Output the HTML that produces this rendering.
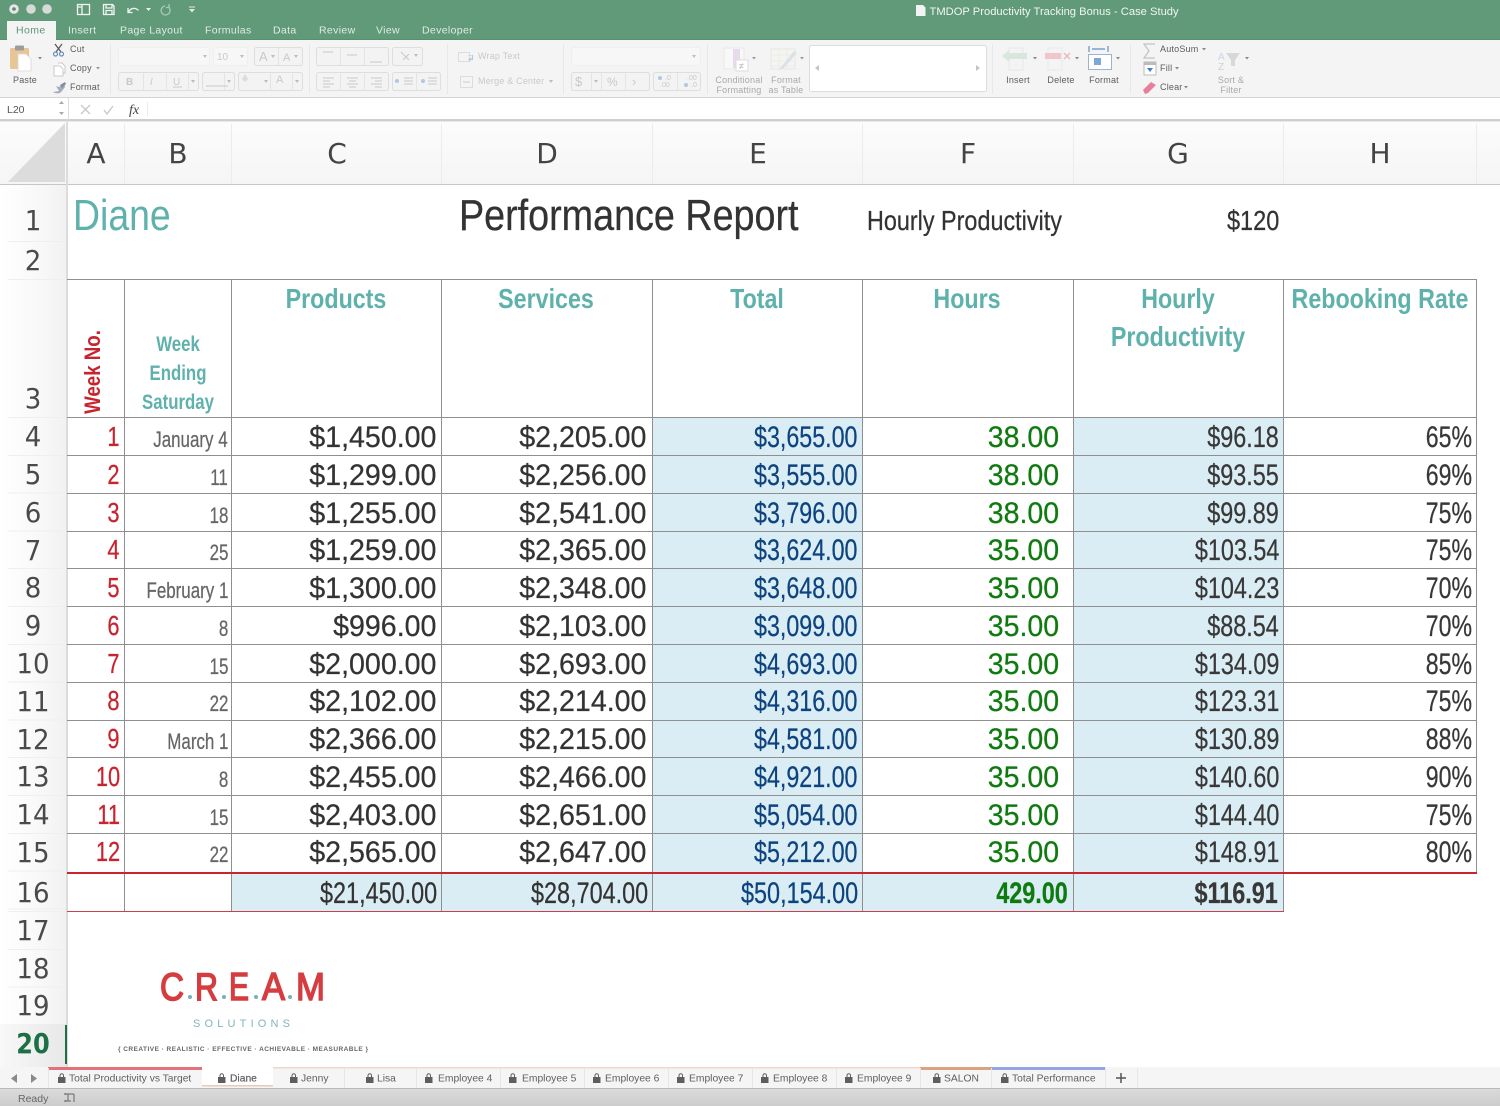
<!DOCTYPE html>
<html><head><meta charset="utf-8"><title>Performance Report</title>
<style>
html,body{margin:0;padding:0;background:#fff}
#p{position:relative;width:1500px;height:1106px;overflow:hidden;background:#fff;font-family:"Liberation Sans",sans-serif;color:#333}
#p div,#p span{position:absolute;white-space:nowrap}
svg{position:absolute;left:0;top:0}
svg text{font-family:"Liberation Sans",sans-serif}
.rh{left:0;width:66px;text-align:center;font:28px/38px "DejaVu Sans",sans-serif;color:#4a4a4a;height:38px;transform:scaleX(.93)}
.ch{top:134px;font:28px/40px "DejaVu Sans",sans-serif;color:#444;width:100px;text-align:center}
.r{left:0;width:1500px;height:38px;font-size:30px;line-height:38px;-webkit-text-stroke:.25px currentColor}
.r span{transform-origin:100% 50%;top:1px}
.a{right:1380px;color:#c8242f;font-size:28px;transform:scaleX(.78);top:0!important}
.b{right:1272px;color:#666;font-size:22px;top:3px!important;transform:scaleX(.77)}
.c{right:1064px;transform:scaleX(.953)}
.d{right:854px;transform:scaleX(.953)}
.e{right:643px;color:#0d437f;transform:scaleX(.775)}
.f{right:441px;color:#0f7a0f;transform:scaleX(.95)}
.g{right:221px;color:#383838;transform:scaleX(.78)}
.h{right:28px;color:#383838;transform:scaleX(.77)}
.hd{font-weight:bold;font-size:28px;line-height:34px;color:#5fb1ac;transform:scaleX(.83);text-align:center;width:300px}
.wk{font-weight:bold;font-size:21px;line-height:29px;color:#5fb1ac;transform:scaleX(.8);text-align:center;width:200px;left:78px}
.vl{width:1px;background:#8f8f8f}
.hl{height:1px;background:#8f8f8f}
.fill{background:#dbedf4}
</style></head><body><div id="p">

<!-- sheet fills -->
<div class="fill" style="left:652px;top:418px;width:211px;height:456px"></div>
<div class="fill" style="left:1073px;top:418px;width:211px;height:456px"></div>
<div class="fill" style="left:232px;top:874px;width:1052px;height:37px"></div>

<!-- header backgrounds -->
<div style="left:0;top:122px;width:1500px;height:62px;background:linear-gradient(#fcfcfc,#f5f5f5)"></div>
<div style="left:0;top:184px;width:66px;height:883px;background:linear-gradient(90deg,#fff,#f7f7f7 70%,#f1f1f1)"></div>
<div style="left:8px;top:241px;width:58px;height:1px;background:#efefef"></div>
<div style="left:8px;top:279px;width:58px;height:1px;background:#efefef"></div>
<div style="left:8px;top:417px;width:58px;height:494px;background:repeating-linear-gradient(#efefef 0,#efefef 1px,transparent 1px,transparent 37.8px)"></div>
<div style="left:8px;top:911px;width:58px;height:114px;background:repeating-linear-gradient(#efefef 0,#efefef 1px,transparent 1px,transparent 37.8px)"></div>
<div style="left:0;top:1024px;width:66px;height:43px;background:linear-gradient(90deg,#f8f8f8,#e8e8e8)"></div>
<div style="left:0;top:184px;width:1500px;height:1px;background:#c6c6c6"></div>
<div style="left:66px;top:122px;width:2px;height:945px;background:#dcdcdc"></div>
<div style="left:65px;top:1025px;width:2px;height:39px;background:#1d7044"></div>

<!-- grid -->
<div class="hl" style="left:67px;top:279px;width:1410px"></div>
<div class="hl" style="left:67px;top:417px;width:1410px"></div>
<div class="hl" style="left:67px;top:455px;width:1410px"></div>
<div class="hl" style="left:67px;top:493px;width:1410px"></div>
<div class="hl" style="left:67px;top:531px;width:1410px"></div>
<div class="hl" style="left:67px;top:568px;width:1410px"></div>
<div class="hl" style="left:67px;top:606px;width:1410px"></div>
<div class="hl" style="left:67px;top:644px;width:1410px"></div>
<div class="hl" style="left:67px;top:682px;width:1410px"></div>
<div class="hl" style="left:67px;top:720px;width:1410px"></div>
<div class="hl" style="left:67px;top:757px;width:1410px"></div>
<div class="hl" style="left:67px;top:795px;width:1410px"></div>
<div class="hl" style="left:67px;top:833px;width:1410px"></div>
<div class="vl" style="left:124px;top:279px;height:633px"></div>
<div class="vl" style="left:231px;top:279px;height:633px"></div>
<div class="vl" style="left:441px;top:279px;height:633px"></div>
<div class="vl" style="left:652px;top:279px;height:633px"></div>
<div class="vl" style="left:862px;top:279px;height:633px"></div>
<div class="vl" style="left:1073px;top:279px;height:633px"></div>
<div class="vl" style="left:1283px;top:279px;height:633px"></div>
<div class="vl" style="left:1476px;top:279px;height:595px"></div>
<div style="left:67px;top:872px;width:1410px;height:2px;background:#c9252f"></div>
<div style="left:67px;top:911px;width:1217px;height:1px;background:#c9404a"></div>

<!-- column header separators -->
<div style="left:124px;top:124px;width:1px;height:60px;background:#ececec"></div>
<div style="left:231px;top:124px;width:1px;height:60px;background:#ececec"></div>
<div style="left:441px;top:124px;width:1px;height:60px;background:#ececec"></div>
<div style="left:652px;top:124px;width:1px;height:60px;background:#ececec"></div>
<div style="left:862px;top:124px;width:1px;height:60px;background:#ececec"></div>
<div style="left:1073px;top:124px;width:1px;height:60px;background:#ececec"></div>
<div style="left:1283px;top:124px;width:1px;height:60px;background:#ececec"></div>
<div style="left:1476px;top:124px;width:1px;height:60px;background:#ececec"></div>

<div class="ch" style="left:46px">A</div>
<div class="ch" style="left:128px">B</div>
<div class="ch" style="left:287px">C</div>
<div class="ch" style="left:497px">D</div>
<div class="ch" style="left:708px">E</div>
<div class="ch" style="left:918px">F</div>
<div class="ch" style="left:1128px">G</div>
<div class="ch" style="left:1330px">H</div>

<div class="rh" style="top:202px">1</div>
<div class="rh" style="top:242px">2</div>
<div class="rh" style="top:380px">3</div>
<div class="rh" style="top:418px">4</div>
<div class="rh" style="top:456px">5</div>
<div class="rh" style="top:494px">6</div>
<div class="rh" style="top:532px">7</div>
<div class="rh" style="top:569px">8</div>
<div class="rh" style="top:607px">9</div>
<div class="rh" style="top:645px">10</div>
<div class="rh" style="top:683px">11</div>
<div class="rh" style="top:721px">12</div>
<div class="rh" style="top:758px">13</div>
<div class="rh" style="top:796px">14</div>
<div class="rh" style="top:834px">15</div>
<div class="rh" style="top:874px">16</div>
<div class="rh" style="top:912px">17</div>
<div class="rh" style="top:950px">18</div>
<div class="rh" style="top:987px">19</div>
<div class="rh" style="top:1025px;font-weight:bold;color:#1d7044;transform:scaleX(.86)">20</div>

<!-- title row -->
<div style="left:73px;top:190px;font-size:44px;line-height:52px;color:#5fb1ac;transform:scaleX(.85);transform-origin:0 50%">Diane</div>
<div style="left:459px;top:190px;font-size:44px;line-height:52px;color:#333;transform:scaleX(.857);transform-origin:0 50%;-webkit-text-stroke:.3px #333">Performance Report</div>
<div style="left:867px;top:204px;font-size:28px;line-height:34px;color:#333;transform:scaleX(.835);transform-origin:0 50%;-webkit-text-stroke:.25px #333">Hourly Productivity</div>
<div style="right:221px;top:204px;font-size:28px;line-height:34px;color:#333;transform:scaleX(.84);transform-origin:100% 50%;-webkit-text-stroke:.25px #333">$120</div>

<!-- table header -->
<div class="hd" style="left:186px;top:282px">Products</div>
<div class="hd" style="left:396px;top:282px">Services</div>
<div class="hd" style="left:607px;top:282px">Total</div>
<div class="hd" style="left:817px;top:282px">Hours</div>
<div class="hd" style="left:1028px;top:282px">Hourly</div>
<div class="hd" style="left:1028px;top:320px">Productivity</div>
<div class="hd" style="left:1230px;top:282px">Rebooking Rate</div>
<div class="wk" style="top:330px">Week</div>
<div class="wk" style="top:359px">Ending</div>
<div class="wk" style="top:388px">Saturday</div>
<div style="left:43px;top:359px;width:100px;height:26px;text-align:center;font-weight:bold;font-size:22px;line-height:26px;color:#c8242f;transform:rotate(-90deg) scaleX(.85)">Week No.</div>

<!-- rows -->
<div class="r" style="top:418px"><span class="a">1</span><span class="b">January 4</span><span class="c">$1,450.00</span><span class="d">$2,205.00</span><span class="e">$3,655.00</span><span class="f">38.00</span><span class="g">$96.18</span><span class="h">65%</span></div>
<div class="r" style="top:456px"><span class="a">2</span><span class="b">11</span><span class="c">$1,299.00</span><span class="d">$2,256.00</span><span class="e">$3,555.00</span><span class="f">38.00</span><span class="g">$93.55</span><span class="h">69%</span></div>
<div class="r" style="top:494px"><span class="a">3</span><span class="b">18</span><span class="c">$1,255.00</span><span class="d">$2,541.00</span><span class="e">$3,796.00</span><span class="f">38.00</span><span class="g">$99.89</span><span class="h">75%</span></div>
<div class="r" style="top:531px"><span class="a">4</span><span class="b">25</span><span class="c">$1,259.00</span><span class="d">$2,365.00</span><span class="e">$3,624.00</span><span class="f">35.00</span><span class="g">$103.54</span><span class="h">75%</span></div>
<div class="r" style="top:569px"><span class="a">5</span><span class="b">February 1</span><span class="c">$1,300.00</span><span class="d">$2,348.00</span><span class="e">$3,648.00</span><span class="f">35.00</span><span class="g">$104.23</span><span class="h">70%</span></div>
<div class="r" style="top:607px"><span class="a">6</span><span class="b">8</span><span class="c">$996.00</span><span class="d">$2,103.00</span><span class="e">$3,099.00</span><span class="f">35.00</span><span class="g">$88.54</span><span class="h">70%</span></div>
<div class="r" style="top:645px"><span class="a">7</span><span class="b">15</span><span class="c">$2,000.00</span><span class="d">$2,693.00</span><span class="e">$4,693.00</span><span class="f">35.00</span><span class="g">$134.09</span><span class="h">85%</span></div>
<div class="r" style="top:682px"><span class="a">8</span><span class="b">22</span><span class="c">$2,102.00</span><span class="d">$2,214.00</span><span class="e">$4,316.00</span><span class="f">35.00</span><span class="g">$123.31</span><span class="h">75%</span></div>
<div class="r" style="top:720px"><span class="a">9</span><span class="b">March 1</span><span class="c">$2,366.00</span><span class="d">$2,215.00</span><span class="e">$4,581.00</span><span class="f">35.00</span><span class="g">$130.89</span><span class="h">88%</span></div>
<div class="r" style="top:758px"><span class="a">10</span><span class="b">8</span><span class="c">$2,455.00</span><span class="d">$2,466.00</span><span class="e">$4,921.00</span><span class="f">35.00</span><span class="g">$140.60</span><span class="h">90%</span></div>
<div class="r" style="top:796px"><span class="a">11</span><span class="b">15</span><span class="c">$2,403.00</span><span class="d">$2,651.00</span><span class="e">$5,054.00</span><span class="f">35.00</span><span class="g">$144.40</span><span class="h">75%</span></div>
<div class="r" style="top:833px"><span class="a">12</span><span class="b">22</span><span class="c">$2,565.00</span><span class="d">$2,647.00</span><span class="e">$5,212.00</span><span class="f">35.00</span><span class="g">$148.91</span><span class="h">80%</span></div>
<div class="r" style="top:874px">
<span class="c" style="right:1063px;transform:scaleX(.78)">$21,450.00</span>
<span class="d" style="right:852px;transform:scaleX(.78)">$28,704.00</span>
<span class="e" style="right:642px;transform:scaleX(.78)">$50,154.00</span>
<span class="f" style="right:432px;font-weight:bold;transform:scaleX(.78)">429.00</span>
<span class="g" style="right:222px;font-weight:bold">$116.91</span>
</div>

<!-- logo -->
<svg width="1500" height="1106" style="pointer-events:none">
<g font-size="39" font-weight="normal" fill="#d53d41" stroke="#d53d41" stroke-width="1.500">
<text x="160" y="1000" textLength="24" lengthAdjust="spacingAndGlyphs">C</text>
<text x="195" y="1000" textLength="23" lengthAdjust="spacingAndGlyphs">R</text>
<text x="229" y="1000" textLength="20" lengthAdjust="spacingAndGlyphs">E</text>
<text x="262" y="1000" textLength="23" lengthAdjust="spacingAndGlyphs">A</text>
<text x="296" y="1000" textLength="29" lengthAdjust="spacingAndGlyphs">M</text>
</g>
<g fill="#6fb3b4"><circle cx="190" cy="997" r="2"/><circle cx="224" cy="997" r="2"/><circle cx="256" cy="997" r="2"/><circle cx="290" cy="997" r="2"/></g>
<text x="193" y="1027" font-size="11" fill="#7fb7bb" textLength="97" lengthAdjust="spacing">SOLUTIONS</text>
<text x="118" y="1051" font-size="6.5" font-weight="bold" fill="#666" textLength="250" lengthAdjust="spacing">{ CREATIVE · REALISTIC · EFFECTIVE · ACHIEVABLE · MEASURABLE }</text>

<!-- corner -->
<polygon points="8,182 65,123 65,182" fill="#dcdcdc"/>

<!-- title bar + ribbon -->
<rect x="0" y="0" width="1500" height="40" fill="#609a79"/>
<rect x="0" y="39" width="1500" height="1" fill="#56906f"/>
<rect x="0" y="40" width="1500" height="57" fill="#f5f4f4"/>
<rect x="0" y="97" width="1500" height="1" fill="#d4d4d4"/>
<rect x="0" y="98" width="1500" height="22" fill="#fff"/>
<rect x="0" y="119" width="1500" height="3" fill="#cfcfcf"/>
<rect x="0" y="121" width="1500" height="1" fill="#e8e8e8"/>
<rect x="7" y="21" width="49" height="19" fill="#f5f4f4"/>

<circle cx="14" cy="9" r="4.8" fill="#e4e7e5"/><circle cx="14" cy="9" r="1.8" fill="#6d7f75"/>
<circle cx="31" cy="9" r="4.8" fill="#d5dbd7"/><circle cx="47" cy="9" r="4.8" fill="#d5dbd7"/>

<g fill="none" stroke="#f0f5f2" stroke-width="1.3">
<rect x="77.5" y="4.5" width="12" height="10"/><path d="M82 5v9M78 7h4"/>
<path d="M103.5 4.5h9l1.5 1.5v8.500h-10.500zM106 4.500v3.500h6v-3.500M106 14.500v-4h6v4"/>
<path d="M128 8v4.500h4.500M128.500 12c2-4 7-5 10-1.500"/>
<path d="M165 6a4.500 4.500 0 1 0 4 1.500M169 4v3.500h-3" stroke="#a9c8b6"/>
</g>
<path d="M146 8h5l-2.500 3z" fill="#eaf2ed"/>
<path d="M189 9h6l-3 3.500zM189 6.500h6v1h-6z" fill="#dfe9e3"/>
<path d="M916 5h7l2.500 2.500v8.500h-9.500z" fill="#f1f4f2"/>
<text x="929.500" y="15" font-size="11.200" fill="#f2f6f3">TMDOP Productivity Tracking Bonus - Case Study</text>

<g font-size="10.5" fill="#e1ece5" letter-spacing=".35">
<text x="68" y="33.500">Insert</text><text x="120" y="33.500">Page Layout</text><text x="205" y="33.500">Formulas</text><text x="273" y="33.500">Data</text><text x="319" y="33.500">Review</text><text x="376" y="33.500">View</text><text x="422" y="33.500">Developer</text>
</g>
<text x="16" y="33.500" font-size="10.5" fill="#60957a" letter-spacing=".4">Home</text>

<!-- separators -->
<g fill="#e9e8e8"><rect x="110" y="44" width="1" height="50"/><rect x="309" y="44" width="1" height="50"/><rect x="447" y="44" width="1" height="50"/><rect x="563" y="44" width="1" height="50"/><rect x="707" y="44" width="1" height="50"/><rect x="992" y="44" width="1" height="50"/><rect x="1130" y="44" width="1" height="50"/></g>

<!-- paste -->
<rect x="10" y="48" width="19" height="21" rx="1.500" fill="#e9c596"/>
<rect x="15" y="45.500" width="9" height="5" rx="1" fill="#9c9c9c"/>
<path d="M18 54h8l5 5v12h-13z" fill="#fff" stroke="#d8d8d8" stroke-width=".8"/>
<path d="M38 57h4l-2 2.500z" fill="#888"/>
<g fill="none" stroke="#555" stroke-width="1.200"><path d="M55 44l6 8M62 44l-6 8"/></g>
<g fill="none" stroke="#6a8fc0" stroke-width="1.200"><circle cx="55.500" cy="54" r="2"/><circle cx="61.500" cy="54" r="2"/></g>
<path d="M54 66h6l3 3v7h-9zM58 63h4l3 3v7h-2" fill="#fff" stroke="#bcbcbc" stroke-width=".8"/>
<path d="M64 83l-5 4-3-1 3 5-6 1c3 2 7 2 9-1l3-4z" fill="#a8aeb8"/>
<path d="M60 85l5-3 1 2-4 4z" fill="#7e8da6"/>

<g font-size="9" fill="#5d5d5d" letter-spacing=".2">
<text x="13" y="83">Paste</text><text x="70" y="52">Cut</text><text x="70" y="71">Copy</text><text x="70" y="90">Format</text>
</g>
<path d="M96 67h4l-2 2.500z" fill="#999"/>

<!-- disabled boxes -->
<g fill="#f8f7f7" stroke="#efefef">
<rect x="118.500" y="47.500" width="91" height="18" rx="2"/><rect x="213.500" y="47.500" width="34" height="18" rx="2"/><rect x="571.500" y="47.500" width="129" height="18" rx="2"/>
</g>
<g fill="#f3f3f3" stroke="#dedede">
<rect x="254.500" y="47.500" width="48" height="18" rx="2"/>
<rect x="118.500" y="72.500" width="80" height="18" rx="2"/><rect x="202.500" y="72.500" width="32" height="18" rx="2"/><rect x="238.500" y="72.500" width="64" height="18" rx="2"/>
<rect x="316.500" y="47.500" width="72" height="18" rx="2"/><rect x="392.500" y="47.500" width="30" height="18" rx="2"/>
<rect x="316.500" y="72.500" width="72" height="18" rx="2"/><rect x="392.500" y="72.500" width="48" height="18" rx="2"/>
<rect x="571.500" y="72.500" width="78" height="18" rx="2"/><rect x="653.500" y="72.500" width="47" height="18" rx="2"/>
</g>
<g fill="#e4e4e4">
<rect x="278" y="48" width="1" height="17"/><rect x="143" y="73" width="1" height="17"/><rect x="166" y="73" width="1" height="17"/><rect x="188" y="73" width="1" height="17"/><rect x="224" y="73" width="1" height="17"/><rect x="270" y="73" width="1" height="17"/><rect x="292" y="73" width="1" height="17"/>
<rect x="340" y="48" width="1" height="17"/><rect x="364" y="48" width="1" height="17"/><rect x="340" y="73" width="1" height="17"/><rect x="364" y="73" width="1" height="17"/><rect x="416" y="73" width="1" height="17"/>
<rect x="591" y="73" width="1" height="17"/><rect x="601" y="73" width="1" height="17"/><rect x="625" y="73" width="1" height="17"/><rect x="677" y="73" width="1" height="17"/>
</g>
<g fill="#c9c9c9" font-size="11">
<text x="259" y="61" font-size="13">A</text><text x="283" y="61">A</text>
<text x="126" y="85" font-size="10" font-weight="bold">B</text><text x="150" y="85" font-size="10" font-style="italic">I</text><text x="173" y="85" font-size="10">U</text>
<text x="217" y="60" font-size="10">10</text>
<text x="276" y="83" font-size="11">A</text>
<text x="575" y="86" font-size="13">$</text><text x="607" y="86" font-size="12">%</text><text x="632" y="86" font-size="13">›</text>
<text x="478" y="59" font-size="9" letter-spacing=".2">Wrap Text</text>
<text x="478" y="84" font-size="9" letter-spacing=".2">Merge &amp; Center</text>
</g>
<g fill="#bdbdbd"><path d="M203 55h4l-2 3zM240 55h4l-2 3zM191 80h4l-2 3zM227 80h4l-2 3zM264 80h4l-2 3zM295 80h4l-2 3zM414 54h4l-2 3zM549 80h4l-2 3zM594 80h4l-2 3zM692 55h4l-2 3zM271 55h4l-2 3zM294 55h4l-2 3z"/></g>
<path d="M245 74l3 5-3 3-3-3z" fill="#dcdcdc"/>
<g stroke="#c9c9c9" fill="none">
<path d="M323 52h10M347 55h10M370 62h12M206 86h22M173 87h9M323 78h11M323 81h7M323 84h11M323 87h7M347 78h11M349 81h7M347 84h11M349 87h7M371 78h11M375 81h7M371 84h11M375 87h7M404 78h9M404 81h9M404 84h9M428 78h9M428 81h9M428 84h9"/>
<path d="M401 52l8 8M403 60l6-6"/>
<rect x="458.500" y="52.500" width="11" height="9" stroke="#ddd"/><rect x="460.500" y="76.500" width="12" height="11" stroke="#ddd"/>
<path d="M463 82h7" stroke="#ccc"/>
</g>
<path d="M468 55h5v5h-3l1 2-3-2.500 3-2.500-1 1.500h2v-3h-4z" fill="#b3c6dc"/>
<g fill="#b4c7dd"><circle cx="397" cy="81" r="2"/><circle cx="423" cy="81" r="2"/><circle cx="660" cy="78" r="2"/><circle cx="686" cy="85" r="2"/></g>
<g fill="#c9c9c9" font-size="7"><text x="665" y="80">.0</text><text x="660" y="87">.00</text><text x="687" y="80">.00</text><text x="691" y="87">.0</text></g>

<!-- conditional formatting / table -->
<rect x="724" y="48" width="20" height="21" fill="#f8f8f8" stroke="#e8e8e8"/>
<rect x="733" y="49" width="7" height="19" fill="#e6dcec"/>
<rect x="736" y="60" width="12" height="11" fill="#fff" stroke="#dcdcdc"/>
<text x="739" y="69" font-size="9" fill="#aaa">≠</text>
<path d="M752 57h4l-2 2.500zM800 57h4l-2 2.500z" fill="#999"/>
<rect x="771" y="49" width="24" height="20" fill="#f5f5f0" stroke="#e6e6e6"/>
<path d="M771 55h24M771 61h24M771 66h24M779 49v20M787 49v20" stroke="#eaeaea" fill="none"/>
<path d="M794 51l-12 15-4 4 6-2 13-15z" fill="#d9e2ea"/>
<g font-size="9" fill="#a9a9a9" text-anchor="middle" letter-spacing=".2">
<text x="739" y="83">Conditional</text><text x="739" y="93">Formatting</text><text x="786" y="83">Format</text><text x="786" y="93">as Table</text>
<text x="1231" y="83">Sort &amp;</text><text x="1231" y="93">Filter</text>
</g>
<rect x="809.500" y="45.500" width="177" height="46" rx="2" fill="#fff" stroke="#dcdcdc"/>
<path d="M819 65l-4 3 4 3zM976 65l4 3-4 3z" fill="#c4c4c4"/>

<!-- insert/delete/format -->
<rect x="1009" y="48" width="14" height="22" fill="none" stroke="#e8e8e8"/>
<path d="M1002 56l7-6v3h18v6h-18v3z" fill="#d8e7dc"/>
<path d="M1033 57h4l-2 2.500zM1075 57h4l-2 2.500zM1116 57h4l-2 2.500z" fill="#888"/>
<rect x="1048" y="48" width="14" height="22" fill="none" stroke="#e8e8e8"/>
<rect x="1045" y="53" width="16" height="6" fill="#f0c6cb"/>
<path d="M1064 53l6 6M1070 53l-6 6" stroke="#e7b6bd" stroke-width="1.400"/>
<path d="M1089 46v6M1108 46v6M1092 49h13" stroke="#5d8fcc" stroke-width="1.200"/>
<rect x="1088.500" y="54.500" width="23" height="15" fill="#fff" stroke="#9cb4cf"/>
<rect x="1094" y="58" width="7" height="7" fill="#7ea6d6"/>
<g font-size="9" fill="#5d5d5d" text-anchor="middle" letter-spacing=".2"><text x="1018" y="83">Insert</text><text x="1061" y="83">Delete</text><text x="1104" y="83">Format</text></g>

<!-- editing -->
<path d="M1155 44h-11l5 7-5 7h11" fill="none" stroke="#c4c4c4" stroke-width="1.300"/>
<rect x="1144" y="62" width="12" height="13" fill="#fff" stroke="#bbb"/><rect x="1144" y="62" width="12" height="3" fill="#bbb"/>
<path d="M1147 68h6l-3 4z" fill="#3f7fd0"/>
<path d="M1143 90l8-8 5 3-8 8-3 1z" fill="#e77f9c"/>
<g font-size="9" fill="#5d5d5d" letter-spacing=".2"><text x="1160" y="52">AutoSum</text><text x="1160" y="71">Fill</text><text x="1160" y="90">Clear</text></g>
<path d="M1202 48h4l-2 2.500zM1175 67h4l-2 2.500zM1184 86h4l-2 2.500zM1245 57h4l-2 2.500z" fill="#888"/>
<text x="1218" y="60" font-size="10" fill="#c7d4e6">A</text><text x="1218" y="70" font-size="10" fill="#cfcfcf">Z</text>
<path d="M1226 53h14l-5 7v6l-4 0v-6z" fill="#d8d8d8"/>

<!-- formula bar -->
<text x="7" y="113" font-size="10.500" fill="#555">L20</text>
<path d="M59 104h5l-2.500-3zM59 112h5l-2.500 3z" fill="#aaa"/>
<rect x="68" y="98" width="1" height="22" fill="#ddd"/>
<path d="M81 105l9 9M90 105l-9 9M104 110l3 4 6-8" fill="none" stroke="#c8c8c8" stroke-width="1.300"/>
<text x="129" y="114" font-style="italic" font-size="14" fill="#444" style="font-family:'Liberation Serif',serif">fx</text>
<rect x="147" y="102" width="1" height="14" fill="#ececec"/>

<!-- tabs -->
<rect x="0" y="1067" width="1500" height="22" fill="#f6f5f5"/>
<rect x="0" y="1088" width="1500" height="1.500" fill="#b9b9b9"/>
<defs><linearGradient id="st" x1="0" y1="0" x2="0" y2="1"><stop offset="0" stop-color="#d9d9d9"/><stop offset="1" stop-color="#cdcdcd"/></linearGradient></defs>
<rect x="0" y="1090" width="1500" height="16" fill="url(#st)"/>
<rect x="48" y="1067" width="154" height="3" fill="#e0727a"/>
<rect x="202" y="1067" width="71" height="19" fill="#fff"/>
<rect x="202" y="1085" width="71" height="1.500" fill="#e9c9bb"/>
<rect x="273" y="1067" width="647" height="1.500" fill="#f0d8cb"/>
<rect x="920" y="1067" width="71" height="3" fill="#dba27e"/>
<rect x="991" y="1067" width="114" height="3" fill="#95a4e2"/>
<g fill="#e6e6e6"><rect x="48" y="1068" width="1" height="20"/><rect x="344" y="1068" width="1" height="20"/><rect x="416" y="1068" width="1" height="20"/><rect x="500" y="1068" width="1" height="20"/><rect x="584" y="1068" width="1" height="20"/><rect x="668" y="1068" width="1" height="20"/><rect x="752" y="1068" width="1" height="20"/><rect x="836" y="1068" width="1" height="20"/><rect x="920" y="1068" width="1" height="20"/><rect x="991" y="1068" width="1" height="20"/><rect x="1105" y="1068" width="1" height="20"/><rect x="1137" y="1068" width="1" height="20"/></g>
<path d="M17 1074l-6 4.500 6 4.500zM31 1074l6 4.500-6 4.500z" fill="#8a8a8a"/>
<g fill="#5e5e5e">
<path id="l" d="M58 1077h7.500v6h-7.500zM59.500 1077v-1.500a2.250 2.250 0 0 1 4.500 0v1.500h-1v-1.500a1.250 1.250 0 0 0-2.500 0v1.500z"/>
<use href="#l" x="160"/><use href="#l" x="232"/><use href="#l" x="308"/><use href="#l" x="367"/><use href="#l" x="451"/><use href="#l" x="535"/><use href="#l" x="619"/><use href="#l" x="703"/><use href="#l" x="787"/><use href="#l" x="875"/><use href="#l" x="943"/>
</g>
<g font-size="10.300" fill="#5f5f5f">
<text x="69" y="1081.500">Total Productivity vs Target</text>
<text x="230" y="1081.500" stroke="#5f5f5f" stroke-width=".2">Diane</text>
<text x="301" y="1081.500">Jenny</text>
<text x="377" y="1081.500">Lisa</text>
<text x="438" y="1081.500">Employee 4</text>
<text x="522" y="1081.500">Employee 5</text>
<text x="605" y="1081.500">Employee 6</text>
<text x="689" y="1081.500">Employee 7</text>
<text x="773" y="1081.500">Employee 8</text>
<text x="857" y="1081.500">Employee 9</text>
<text x="944" y="1081.500">SALON</text>
<text x="1012" y="1081.500">Total Performance</text>
</g>
<path d="M1121 1073v10M1116 1078h10" stroke="#555" stroke-width="1.500"/>
<text x="18" y="1102" font-size="10.500" fill="#666">Ready</text>
<g fill="none" stroke="#666"><path d="M65 1094h9M74 1094v8M65 1101h6M68 1094v7M65 1093v2M65 1100v2"/></g>
</svg>
</div></body></html>
